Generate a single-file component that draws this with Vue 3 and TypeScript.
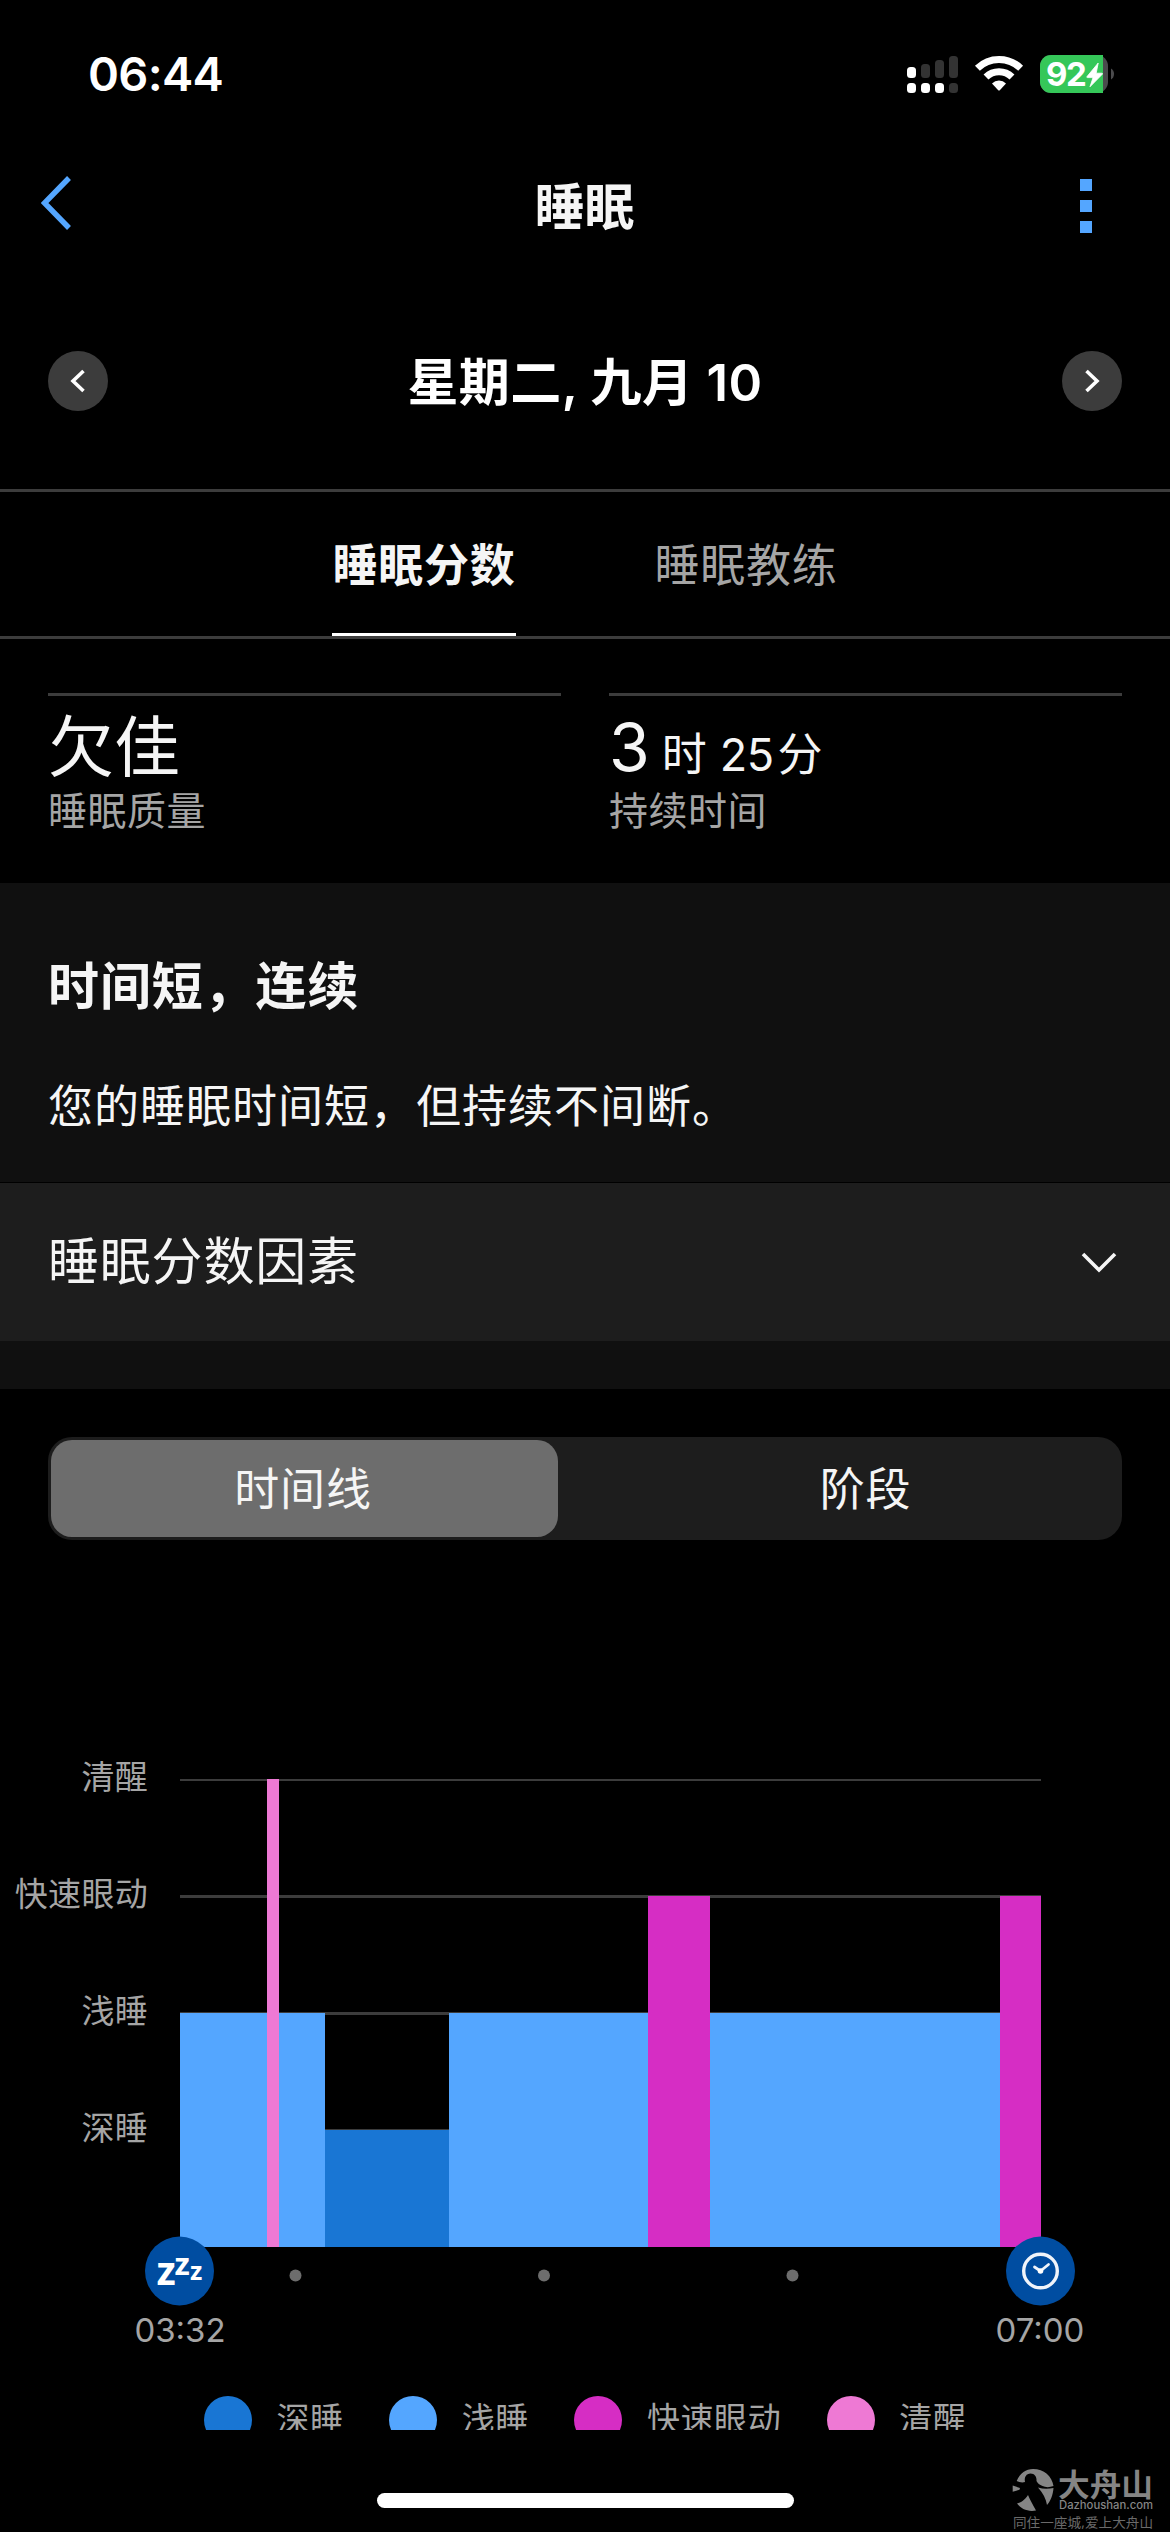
<script setup lang="ts">
import { ref } from 'vue'

type Stage = 'deep' | 'light' | 'rem' | 'awake'

interface Segment {
  stage: Stage
  start: number
  width: number
}

const stageNames: Record<Stage, string> = {
  deep: '深睡',
  light: '浅睡',
  rem: '快速眼动',
  awake: '清醒',
}

const axis: Stage[] = ['awake', 'rem', 'light', 'deep']
const legend: Stage[] = ['deep', 'light', 'rem', 'awake']

// Ordered so that the short awake phase is painted over the light one
const segments: Segment[] = [
  { stage: 'light', start: 0, width: 145 },
  { stage: 'awake', start: 87, width: 12 },
  { stage: 'deep', start: 145, width: 124 },
  { stage: 'light', start: 269, width: 199 },
  { stage: 'rem', start: 468, width: 62 },
  { stage: 'light', start: 530, width: 290 },
  { stage: 'rem', start: 820, width: 41 },
]

const levels: Record<Stage, number> = { deep: 117, light: 234, rem: 351, awake: 468 }

const hours = [115.5, 364, 612.5]
const view = ref<'timeline' | 'stages'>('timeline')
const tab = ref<'score' | 'coach'>('score')
</script>

<template>
  <div class="screen">
    <header class="status">
      <span class="clock">06:44</span>
      <svg class="status-icons" width="210" height="40" viewBox="0 0 210 40">
        <g fill="#333">
          <rect x="15" y="9" width="9" height="14" rx="3.5" />
          <rect x="29" y="5" width="9" height="18" rx="3.5" />
          <rect x="43" y="1" width="9" height="22" rx="3.5" />
          <rect x="43" y="28" width="9" height="10" rx="3.5" />
        </g>
        <g fill="#fff">
          <rect x="1" y="12" width="9" height="11" rx="3.5" />
          <rect x="1" y="28" width="9" height="10" rx="3.5" />
          <rect x="15" y="28" width="9" height="10" rx="3.5" />
          <rect x="29" y="28" width="9" height="10" rx="3.5" />
        </g>
        <g fill="none" stroke="#fff" stroke-width="7">
          <path d="M71.4 13.2a31 31 0 0 1 43.2 0" />
          <path d="M80 22a18.6 18.6 0 0 1 26 0" />
        </g>
        <path d="M86 28.4a10.2 10.2 0 0 1 14 0l-6 6.6a1.4 1.4 0 0 1-2 0z" fill="#fff" />
        <rect x="134" y="0" width="68" height="38" rx="11" fill="#4b4b4d" />
        <path d="M145 0H197V38H145A11 11 0 0 1 134 27V11A11 11 0 0 1 145 0Z" fill="#35c759" />
        <path d="M205 13.5a6.5 6.5 0 0 1 0 11z" fill="#4b4b4d" />
        <text x="140" y="31" class="battery-text">92</text>
        <path
          d="M192.200 8 181 21.600Q180.400 22.600 181.600 22.600H187L184 31.800 196.300 19.200Q196.900 18.200 195.800 18.200H190.200z"
          fill="#fff"
          stroke="#fff"
          stroke-width="0.800"
          stroke-linejoin="round"
        />
      </svg>
    </header>

    <nav class="nav">
      <svg width="32" height="54" viewBox="0 0 32 54">
        <path d="M28 2 3.500 27 28 52" fill="none" stroke="#54a6ff" stroke-width="5.500" />
      </svg>
      <h1>睡眠</h1>
      <div class="more"><i></i><i></i><i></i></div>
    </nav>

    <section class="date">
      <button class="round">
        <svg width="60" height="60" viewBox="0 0 60 60"><path d="M35.500 20 25 30l10.500 10" /></svg>
      </button>
      <span>星期二, 九月 10</span>
      <button class="round">
        <svg width="60" height="60" viewBox="0 0 60 60"><path d="M24.500 20 35 30 24.500 40" /></svg>
      </button>
    </section>

    <section class="tabs">
      <button :class="{ active: tab === 'score' }" @click="tab = 'score'">睡眠分数</button>
      <button :class="{ active: tab === 'coach' }" @click="tab = 'coach'">睡眠教练</button>
    </section>

    <section class="stats">
      <div class="stat">
        <div class="value"><span class="big">欠佳</span></div>
        <div class="label">睡眠质量</div>
      </div>
      <div class="stat">
        <div class="value">
          <span class="num">3</span><span class="unit hour">时</span><span class="unit min">25</span><span class="unit">分</span>
        </div>
        <div class="label">持续时间</div>
      </div>
    </section>

    <section class="insight">
      <h2>时间短，连续</h2>
      <p>您的睡眠时间短，但持续不间断。</p>
    </section>
    <section class="factors">
      <span>睡眠分数因素</span>
      <svg width="38" height="24" viewBox="0 0 38 24">
        <path d="M3 4 19 20 35 4" fill="none" stroke="#f5f5f5" stroke-width="3.600" />
      </svg>
    </section>
    <div class="spacer"></div>

    <div class="segmented">
      <button :class="{ on: view === 'timeline' }" @click="view = 'timeline'">时间线</button>
      <button :class="{ on: view === 'stages' }" @click="view = 'stages'">阶段</button>
    </div>

    <section class="chart">
      <div class="axis">
        <span v-for="s in axis" :key="s">{{ stageNames[s] }}</span>
      </div>
      <div class="plot">
        <svg width="861" height="470" viewBox="0 0 861 470">
          <g fill="#3c3c3c">
            <rect y="1" width="861" height="2" />
            <rect y="117" width="861" height="3" />
            <rect y="234" width="861" height="3" />
            <rect y="351" width="861" height="3" />
          </g>
          <rect
            v-for="s in segments"
            :key="s.start"
            :class="s.stage"
            :x="s.start"
            :y="469 - levels[s.stage]"
            :width="s.width"
            :height="levels[s.stage]"
          />
        </svg>
        <svg class="markers" width="931" height="70" viewBox="0 0 931 70">
          <circle v-for="h in hours" :key="h" :cx="h + 35" cy="39.500" r="6" fill="#6d6d6d" />
          <circle cx="34.500" cy="35" r="34.500" fill="#004da1" />
          <g class="zzz">
            <text x="11.500" y="48.500" font-size="39">z</text>
            <text x="29.500" y="38.500" font-size="31">z</text>
            <text x="45" y="43.500" font-size="25">z</text>
          </g>
          <circle cx="895.500" cy="35" r="34.500" fill="#004da1" />
          <g fill="none" stroke="#f0f4fa" stroke-linecap="round" stroke-linejoin="round">
            <circle cx="895.500" cy="35" r="16.800" stroke-width="3.400" />
            <path d="M889.500 31 895.500 35 903.500 28.500" stroke-width="2.800" />
          </g>
          <circle cx="895.500" cy="35" r="2.800" fill="#fff" />
        </svg>
      </div>
    </section>
    <div class="times"><span>03:32</span><span>07:00</span></div>
    <div class="legend">
      <div v-for="s in legend" :key="s" class="item">
        <svg width="48" height="48" viewBox="0 0 48 48"><circle cx="24" cy="24" r="24" :class="s" /></svg>
        <span>{{ stageNames[s] }}</span>
      </div>
    </div>

    <div class="home"></div>

    <svg class="watermark" width="160" height="72" viewBox="0 0 160 72">
      <g fill="#858585">
        <path
          d="M6.700 14C10 6 16 2 23 2c11 0 19 7 20.500 17-4 1.500-8 1.500-11 0-3-1-5-3-6-5 .5-4-2-7.500-6-7.500S14 10 15 15c-3 1-6 0-8.300-1z"
        />
        <path d="M2.700 18.500 10 21l-.5 1.800-6.800 2z" />
        <path d="M28 20.500c5 1.500 10 1.500 15.500.5-.5 7-3 13-6.500 17-1-6-4-12-9-17.500z" />
        <path d="M18 28c2 5 5 10 8 15.500C18 45 11 42 7 36.500c4-1 8-3.500 11-8.500z" />
      </g>
      <text x="48" y="29" class="wm-title" textLength="95" lengthAdjust="spacingAndGlyphs">大舟山</text>
      <text x="49" y="42" class="wm-url" textLength="94" lengthAdjust="spacingAndGlyphs">Dazhoushan.com</text>
      <text x="3" y="59.500" class="wm-sub" textLength="140" lengthAdjust="spacingAndGlyphs">同住一座城,爱上大舟山</text>
    </svg>
  </div>
</template>

<style>
body {
  background: #000;
}
</style>

<style scoped>
.screen {
  position: relative;
  display: flex;
  flex-direction: column;
  width: 1170px;
  height: 2532px;
  overflow: hidden;
  background: #000;
  color: #f5f5f5;
  font-family: Inter, 'Noto Sans CJK SC', sans-serif;
  white-space: nowrap;
}
.screen > * {
  flex: none;
  box-sizing: border-box;
}
h1,
h2,
p {
  margin: 0;
}
button {
  padding: 0;
  border: 0;
  background: none;
  color: inherit;
  font: inherit;
}
svg {
  display: block;
}
.deep {
  fill: #1976d4;
}
.light {
  fill: #54a6ff;
}
.rem {
  fill: #d62dc4;
}
.awake {
  fill: #ee79d4;
}
.status {
  display: flex;
  justify-content: space-between;
  align-items: flex-start;
  height: 150px;
  padding: 55px 54px 0 88px;
}
.clock {
  font-size: 47px;
  font-weight: 600;
  line-height: 38px;
  letter-spacing: -0.7px;
  color: #fff;
}
.battery-text {
  fill: #fff;
  font-size: 33px;
  font-weight: 700;
  letter-spacing: -1.4px;
}
.nav {
  display: flex;
  justify-content: space-between;
  align-items: center;
  height: 112px;
  padding: 0 78px 0 41px;
}
.nav > svg {
  margin-top: -6px;
}
.nav h1 {
  width: 200px;
  margin: -6px 0 0 16px;
  text-align: center;
  font-size: 50px;
  font-weight: 600;
}
.more {
  display: flex;
  flex-direction: column;
  gap: 9px;
  width: 12px;
}
.more i {
  width: 12px;
  height: 12px;
  background: #54a6ff;
}
.date {
  display: flex;
  justify-content: space-between;
  align-items: center;
  height: 230px;
  padding: 11px 48px 0;
  border-bottom: 3px solid #3c3c3c;
  color: #fff;
  font-size: 51px;
  font-weight: 600;
  letter-spacing: 0.4px;
}
.date > span {
  margin-top: -4px;
}
.round {
  width: 60px;
  height: 60px;
  border-radius: 50%;
  background: #3c3c3c;
}
.round path {
  fill: none;
  stroke: #fff;
  stroke-width: 3.6;
}
.tabs {
  display: flex;
  justify-content: center;
  gap: 138px;
  height: 147px;
  border-bottom: 3px solid #3c3c3c;
  font-size: 45px;
}
.tabs button {
  box-sizing: border-box;
  width: 184px;
  padding-bottom: 1px;
  border-bottom: 3px solid transparent;
  color: #a5a5a5;
  letter-spacing: 0.8px;
}
.tabs .active {
  border-color: #fff;
  color: #f5f5f5;
  font-weight: 600;
}
.stats {
  display: flex;
  gap: 48px;
  height: 244px;
  padding: 54px 48px 0;
}
.stat {
  flex: 1;
  border-top: 3px solid #3c3c3c;
}
.value {
  display: flex;
  align-items: baseline;
  height: 90px;
  line-height: 102px;
}
.big {
  font-size: 66px;
}
.num {
  font-size: 66px;
}
.unit {
  font-size: 45px;
}
.hour {
  margin: 0 13px 0 12px;
}
.min {
  margin-right: 4px;
  letter-spacing: -0.5px;
}
.label {
  color: #a5a5a5;
  font-size: 39px;
  line-height: 49px;
  letter-spacing: 0.5px;
}
.insight {
  height: 299px;
  padding: 69px 48px 0;
  background: #101010;
}
.insight h2 {
  font-size: 51px;
  font-weight: 600;
  line-height: 70px;
  letter-spacing: 0.9px;
}
.insight p {
  margin-top: 55px;
  font-size: 45px;
  line-height: 60px;
  letter-spacing: 1px;
}
.factors {
  display: flex;
  justify-content: space-between;
  align-items: center;
  height: 158px;
  margin-top: 1px;
  padding: 0 52px 0 48px;
  background: #1d1d1d;
  font-size: 51px;
  letter-spacing: 0.8px;
}
.factors span {
  margin-top: -8px;
}
.spacer {
  height: 48px;
  background: #101010;
}
.segmented {
  display: flex;
  justify-content: space-between;
  height: 103px;
  margin: 48px 48px 0;
  padding: 3px 0 3px 3px;
  border-radius: 24px;
  background: #1d1d1d;
  font-size: 45px;
}
.segmented button {
  width: 507px;
  padding: 0 3px 4px 0;
  border-radius: 21px;
  letter-spacing: 0.8px;
}
.segmented button + button {
  width: 513px;
  padding-right: 0;
}
.segmented .on {
  background: #6d6d6d;
}
.chart {
  display: flex;
  height: 532px;
  margin-top: 238px;
}
.axis {
  display: flex;
  flex-direction: column;
  width: 148px;
  margin-right: 32px;
  margin-top: -59px;
  text-align: right;
  color: #a5a5a5;
  font-size: 33px;
  letter-spacing: 0.3px;
}
.axis span {
  height: 117px;
  line-height: 117px;
}
.plot {
  width: 861px;
}
.markers {
  margin: -12px 0 0 -35px;
}
.times {
  display: flex;
  justify-content: space-between;
  height: 86px;
  padding: 0 70px 0 120px;
  color: #a5a5a5;
  font-size: 33px;
  line-height: 40px;
}
.times span {
  width: 120px;
  text-align: center;
}
.legend {
  display: flex;
  gap: 45.5px;
  height: 34px;
  padding-left: 204px;
  overflow: hidden;
  color: #a5a5a5;
  font-size: 33px;
}
.item {
  display: flex;
  gap: 24.5px;
  height: 48px;
  line-height: 47px;
  letter-spacing: 0.6px;
}
.home {
  align-self: center;
  width: 417px;
  height: 15px;
  margin-top: 63px;
  border-radius: 8px;
  background: #fff;
}
.zzz {
  fill: #fff;
  font-family: 'Noto Sans', sans-serif;
  font-weight: 700;
}
.watermark {
  position: absolute;
  right: 0;
  bottom: -7px;
}
.wm-title {
  fill: #858585;
  font-size: 31px;
  font-weight: 700;
}
.wm-url {
  fill: #858585;
  font-size: 11.5px;
  font-weight: 500;
}
.wm-sub {
  fill: #6a6a6a;
  font-size: 13px;
}
</style>
